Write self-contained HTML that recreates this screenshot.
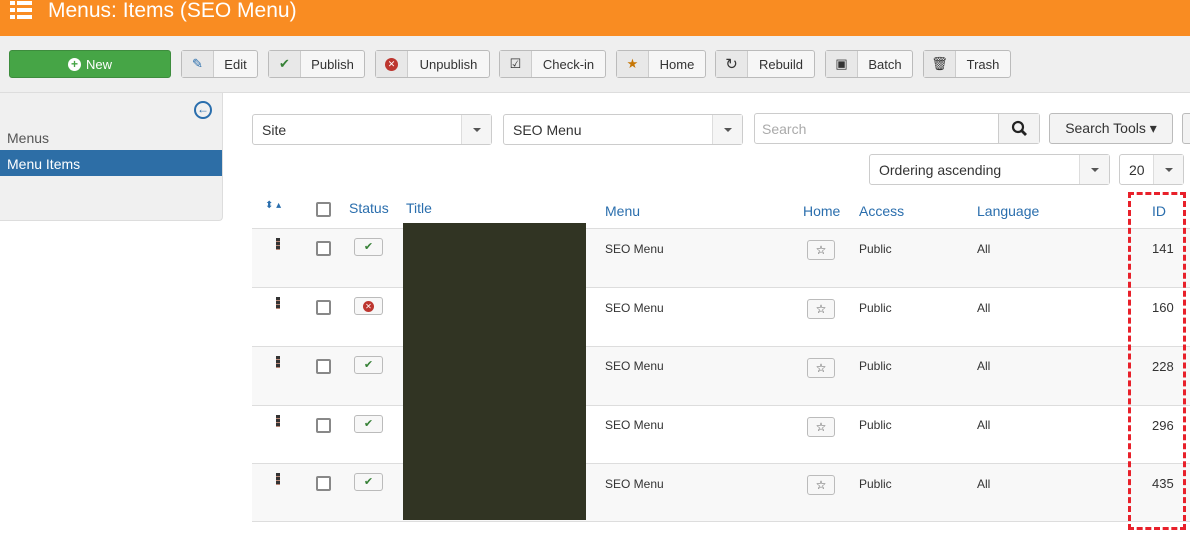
<!DOCTYPE html>
<html><head><meta charset="utf-8"><style>
*{box-sizing:border-box;margin:0;padding:0}
body{width:1190px;height:551px;overflow:hidden;background:#fff;font-family:"Liberation Sans",sans-serif;font-size:13px;color:#333;position:relative}
.a{position:absolute}
.hdr{left:0;top:0;width:1190px;height:36px;background:#f98c22;color:#fff;font-size:21px}
.tb{left:0;top:36px;width:1190px;height:57px;background:#efefef;border-bottom:1px solid #ddd}
.btn{position:absolute;top:14px;height:28px;border:1px solid #bbb;border-radius:3px;background:#f6f6f6;font-size:13px;display:flex;align-items:center}
.btn .ic{width:32px;height:100%;border-right:1px solid #ccc;background:#e8e8e8;display:flex;align-items:center;justify-content:center;font-size:13px}
.btn .t{flex:1;text-align:center}
.side{left:0;top:93px;width:223px;height:128px;background:#f0f0f0;border:1px solid #ddd;border-left:none;border-top:none;border-radius:0 0 4px 0}
.sel{border:1px solid #ccc;border-radius:3px;height:31px;background:#fff;font-size:14px}
.sel .c{position:absolute;right:0;top:0;width:30px;height:29px;border-left:1px solid #ddd;background:#f5f5f5}
.sel .c:after{content:"";position:absolute;left:11px;top:13px;border:4px solid transparent;border-top-color:#555;border-bottom:none}
.th{color:#2a6ead;font-size:14px}
.row{left:252px;width:938px;height:59px;border-top:1px solid #ddd}
.cb{width:15px;height:15px;border:2px solid #888;border-radius:2px;background:#fff}
.st{width:29px;height:18px;border:1px solid #bbb;border-radius:3px;background:#f7f7f7;text-align:center;font-size:11px;line-height:16px}
.hm{width:28px;height:20px;border:1px solid #bbb;border-radius:3px;background:#f7f7f7;text-align:center;font-size:12px;line-height:18px}
.cell{font-size:12px;color:#333}
.dh{width:4px;height:12px;background:repeating-linear-gradient(#333 0 3px,#b87 3px 4px)}
</style></head><body>
<div class="a hdr">
 <div class="a" style="left:10px;top:1px;width:22px;height:18px">
  <div class="a" style="left:0;top:0;width:5px;height:4px;background:#fff"></div><div class="a" style="left:7px;top:0;width:15px;height:4px;background:#fff"></div>
  <div class="a" style="left:0;top:7px;width:5px;height:4px;background:#fff"></div><div class="a" style="left:7px;top:7px;width:15px;height:4px;background:#fff"></div>
  <div class="a" style="left:0;top:14px;width:5px;height:4px;background:#fff"></div><div class="a" style="left:7px;top:14px;width:15px;height:4px;background:#fff"></div>
 </div>
 <div class="a" style="left:48px;top:0;line-height:22px">Menus: Items (SEO Menu)</div>
</div>
<div class="a tb">
 <div class="btn" style="left:9px;width:162px;background:#46a546;border-color:#3d8c3d;color:#fff;justify-content:center"><span style="display:inline-block;width:13px;height:13px;border-radius:50%;background:#fff;color:#46a546;font-size:12px;line-height:13px;text-align:center;font-weight:bold;margin-right:5px">+</span>New</div>
 <div class="btn" style="left:181px;width:77px"><div class="ic" style="color:#2a6ead">✎</div><div class="t">Edit</div></div>
 <div class="btn" style="left:268px;width:97px"><div class="ic" style="color:#378137">✔</div><div class="t">Publish</div></div>
 <div class="btn" style="left:375px;width:115px"><div class="ic"><span style="width:13px;height:13px;border-radius:50%;background:#bd362f;color:#fff;font-size:9px;line-height:13px;text-align:center">✕</span></div><div class="t">Unpublish</div></div>
 <div class="btn" style="left:499px;width:107px"><div class="ic">☑</div><div class="t">Check-in</div></div>
 <div class="btn" style="left:616px;width:90px"><div class="ic" style="color:#c67605">★</div><div class="t">Home</div></div>
 <div class="btn" style="left:715px;width:100px"><div class="ic" style="font-size:15px">↻</div><div class="t">Rebuild</div></div>
 <div class="btn" style="left:825px;width:88px"><div class="ic">▣</div><div class="t">Batch</div></div>
 <div class="btn" style="left:923px;width:88px"><div class="ic">🗑</div><div class="t">Trash</div></div>
</div>
<div class="a side">
 <div class="a" style="left:194px;top:8px;width:18px;height:18px;border:2px solid #2a6ead;border-radius:50%;color:#2a6ead;font-size:12px;line-height:13px;text-align:center;font-weight:bold">←</div>
 <div class="a" style="left:7px;top:37px;font-size:14px;color:#555">Menus</div>
 <div class="a" style="left:0;top:57px;width:222px;height:26px;background:#2d6ea6;color:#fff;font-size:14px;padding:6px 7px">Menu Items</div>
</div>
<div class="a sel" style="left:252px;top:114px;width:240px"><span class="a" style="left:9px;top:7px">Site</span><div class="c"></div></div>
<div class="a sel" style="left:503px;top:114px;width:240px"><span class="a" style="left:9px;top:7px">SEO Menu</span><div class="c"></div></div>
<div class="a sel" style="left:754px;top:113px;width:286px"><span class="a" style="left:7px;top:7px;color:#aaa">Search</span><div class="a" style="right:0;top:0;width:41px;height:29px;border-left:1px solid #ccc;background:#f3f3f3">
<svg width="41" height="29" viewBox="0 0 41 29"><circle cx="19" cy="13" r="5" fill="none" stroke="#222" stroke-width="2.2"/><line x1="22.5" y1="16.5" x2="27" y2="21" stroke="#222" stroke-width="2.8"/></svg></div></div>
<div class="a" style="left:1049px;top:113px;width:124px;height:31px;border:1px solid #bbb;border-radius:3px;background:#f3f3f3;font-size:14px;line-height:29px;text-align:center">Search Tools ▾</div>
<div class="a" style="left:1182px;top:113px;width:20px;height:31px;border:1px solid #bbb;border-radius:3px;background:#f3f3f3"></div>
<div class="a sel" style="left:869px;top:154px;width:241px"><span class="a" style="left:9px;top:7px">Ordering ascending</span><div class="c"></div></div>
<div class="a sel" style="left:1119px;top:154px;width:65px"><span class="a" style="left:9px;top:7px">20</span><div class="c"></div></div>

<div class="a th" style="left:265px;top:200px;font-size:10px">⬍ ▴</div>
<div class="a cb" style="left:316px;top:202px"></div>
<div class="a th" style="left:349px;top:200px">Status</div>
<div class="a th" style="left:406px;top:200px">Title</div>
<div class="a th" style="left:605px;top:203px">Menu</div>
<div class="a th" style="left:803px;top:203px">Home</div>
<div class="a th" style="left:859px;top:203px">Access</div>
<div class="a th" style="left:977px;top:203px">Language</div>
<div class="a th" style="left:1152px;top:203px">ID</div>

<div class="a row" style="top:228px;background:#f8f8f8"></div>
<div class="a row" style="top:287px"></div>
<div class="a row" style="top:346px;background:#f8f8f8"></div>
<div class="a row" style="top:405px"></div>
<div class="a row" style="top:463px;background:#f8f8f8;border-bottom:1px solid #ddd;height:59px"></div>

<div class="a" style="left:403px;top:223px;width:183px;height:297px;background:#313423"></div>

<div class="a dh" style="left:276px;top:238px"></div>
<div class="a cb" style="left:316px;top:241px"></div>
<div class="a st" style="left:354px;top:238px;color:#378137">✔</div>
<div class="a cell" style="left:605px;top:242px">SEO Menu</div>
<div class="a hm" style="left:807px;top:240px">☆</div>
<div class="a cell" style="left:859px;top:242px">Public</div>
<div class="a cell" style="left:977px;top:242px">All</div>
<div class="a cell" style="left:1152px;top:241px;font-size:13px">141</div>

<div class="a dh" style="left:276px;top:297px"></div>
<div class="a cb" style="left:316px;top:300px"></div>
<div class="a st" style="left:354px;top:297px"><span style="display:inline-block;width:11px;height:11px;border-radius:50%;background:#bd362f;color:#fff;font-size:8px;line-height:11px">✕</span></div>
<div class="a cell" style="left:605px;top:301px">SEO Menu</div>
<div class="a hm" style="left:807px;top:299px">☆</div>
<div class="a cell" style="left:859px;top:301px">Public</div>
<div class="a cell" style="left:977px;top:301px">All</div>
<div class="a cell" style="left:1152px;top:300px;font-size:13px">160</div>

<div class="a dh" style="left:276px;top:356px"></div>
<div class="a cb" style="left:316px;top:359px"></div>
<div class="a st" style="left:354px;top:356px;color:#378137">✔</div>
<div class="a cell" style="left:605px;top:359px">SEO Menu</div>
<div class="a hm" style="left:807px;top:358px">☆</div>
<div class="a cell" style="left:859px;top:359px">Public</div>
<div class="a cell" style="left:977px;top:359px">All</div>
<div class="a cell" style="left:1152px;top:359px;font-size:13px">228</div>

<div class="a dh" style="left:276px;top:415px"></div>
<div class="a cb" style="left:316px;top:418px"></div>
<div class="a st" style="left:354px;top:415px;color:#378137">✔</div>
<div class="a cell" style="left:605px;top:418px">SEO Menu</div>
<div class="a hm" style="left:807px;top:417px">☆</div>
<div class="a cell" style="left:859px;top:418px">Public</div>
<div class="a cell" style="left:977px;top:418px">All</div>
<div class="a cell" style="left:1152px;top:418px;font-size:13px">296</div>

<div class="a dh" style="left:276px;top:473px"></div>
<div class="a cb" style="left:316px;top:476px"></div>
<div class="a st" style="left:354px;top:473px;color:#378137">✔</div>
<div class="a cell" style="left:605px;top:477px">SEO Menu</div>
<div class="a hm" style="left:807px;top:475px">☆</div>
<div class="a cell" style="left:859px;top:477px">Public</div>
<div class="a cell" style="left:977px;top:477px">All</div>
<div class="a cell" style="left:1152px;top:476px;font-size:13px">435</div>

<div class="a" style="left:1128px;top:192px;width:58px;height:338px;border:3px dashed #e8202a"></div>
</body></html>
